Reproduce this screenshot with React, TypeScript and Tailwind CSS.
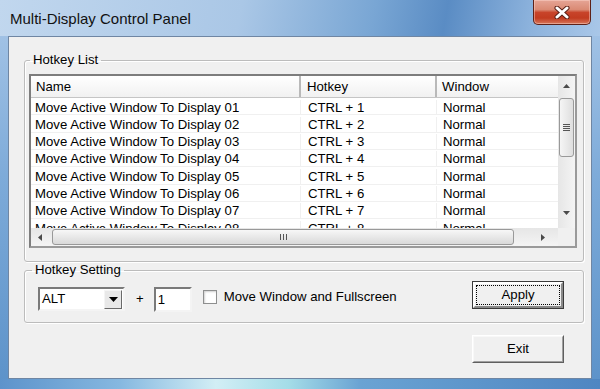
import React from "react";

const rows = Array.from({ length: 8 }, (_, i) => ({
  name: `Move Active Window To Display 0${i + 1}`,
  hotkey: `CTRL + ${i + 1}`,
  window: "Normal",
}));

function Arrow({ dir }: { dir: "up" | "down" | "left" | "right" }) {
  const pts = {
    up: "0,4 7,4 3.5,0",
    down: "0,0 7,0 3.5,4",
    left: "4,0 4,7 0,3.5",
    right: "0,0 0,7 4,3.5",
  }[dir];
  const w = dir === "up" || dir === "down" ? 7 : 4;
  const h = dir === "up" || dir === "down" ? 4 : 7;
  return (
    <svg width={w} height={h} viewBox={`0 0 ${w} ${h}`}>
      <polygon points={pts} fill="#4a4a4a" />
    </svg>
  );
}

function ListView() {
  return (
    <div className="mt-[6px] ml-[4px] w-[548px] h-[174px] border-2 border-t-[#7d7d7d] border-l-[#7d7d7d] border-r-[#9a9a9a] border-b-[#9a9a9a] bg-white flex flex-col">
      <div className="flex flex-1 min-h-0">
        <div className="w-[527px] flex flex-col">
          {/* header */}
          <div className="h-[22px] flex bg-[linear-gradient(180deg,#ffffff,#f1f1f1)] border-b border-[#c5c5c5] text-black">
            <div className="w-[270px] pl-[5px] flex items-center border-r-2 border-r-[#b9b9b9]">Name</div>
            <div className="w-[136px] pl-[6px] flex items-center border-r-2 border-r-[#b9b9b9]">Hotkey</div>
            <div className="flex-1 pl-[5px] flex items-center">Window</div>
          </div>
          {/* rows */}
          <div className="flex-1 overflow-hidden">
            {rows.map((r) => (
              <div key={r.name} className="h-[17.33px] pt-[1.5px] flex leading-[15.5px] border-b border-[#f0f0f0] text-black whitespace-nowrap">
                <div className="w-[270px] pl-[4px] border-r border-[#f0f0f0]">{r.name}</div>
                <div className="w-[136px] pl-[7px] border-r border-[#f0f0f0]">{r.hotkey}</div>
                <div className="flex-1 pl-[6px]">{r.window}</div>
              </div>
            ))}
          </div>
        </div>
        {/* vertical scrollbar */}
        <div className="w-[17px] flex flex-col bg-[linear-gradient(90deg,#e6e6e6,#f4f4f4)]">
          <div className="h-[20px] flex items-center justify-center">
            <Arrow dir="up" />
          </div>
          <div className="mt-[2px] mx-[1px] h-[59px] rounded-[3px] border border-[#999] bg-[linear-gradient(90deg,#f5f5f5,#dedede)] flex flex-col items-center justify-center gap-[1px]">
            <div className="w-[7px] h-px bg-[#555]" />
            <div className="w-[7px] h-px bg-[#555]" />
            <div className="w-[7px] h-px bg-[#555]" />
            <div className="w-[7px] h-px bg-[#555]" />
          </div>
          <div className="flex-1" />
          <div className="h-[20px] mb-[5px] flex items-center justify-center">
            <Arrow dir="down" />
          </div>
        </div>
      </div>
      {/* horizontal scrollbar */}
      <div className="h-[18px] flex">
        <div className="w-[527px] flex items-center bg-[linear-gradient(180deg,#e6e6e6,#f4f4f4)]">
          <div className="w-[18px] flex items-center justify-center">
            <Arrow dir="left" />
          </div>
          <div className="ml-[3px] w-[462px] h-[16px] rounded-[3px] border border-[#999] bg-[linear-gradient(180deg,#f7f7f7,#d9d9d9)] flex items-center justify-center gap-[2px]">
            <div className="w-px h-[6px] bg-[#555]" />
            <div className="w-px h-[6px] bg-[#555]" />
            <div className="w-px h-[6px] bg-[#555]" />
          </div>
          <div className="flex-1" />
          <div className="w-[18px] mr-[6px] flex items-center justify-center">
            <Arrow dir="right" />
          </div>
        </div>
        <div className="flex-1 bg-[#f0f0f0]" />
      </div>
    </div>
  );
}

function ClassicButton({ label, isDefault }: { label: string; isDefault?: boolean }) {
  if (isDefault) {
    return (
      <button className="w-[92px] h-[28px] border border-[#3a3a3a] bg-[#f0f0f0] p-0">
        <div className="h-full border-2 border-t-white border-l-white border-r-[#8a8a8a] border-b-[#8a8a8a] p-[1px]">
          <div className="h-full border border-dotted border-black flex items-center justify-center text-black">
            {label}
          </div>
        </div>
      </button>
    );
  }
  return (
    <button className="w-[92px] h-[28px] border border-t-white border-l-white border-r-[#5f5f5f] border-b-[#5f5f5f] bg-[#f0f0f0] p-0">
      <div className="h-full border border-t-[#f8f8f8] border-l-[#f8f8f8] border-r-[#a0a0a0] border-b-[#a0a0a0] flex items-center justify-center text-black">
        {label}
      </div>
    </button>
  );
}

export default function App() {
  return (
    <div className="w-[600px] h-[389px] flex flex-col overflow-hidden bg-[linear-gradient(180deg,#a9c7e8_0%,#7eabd9_45%,#5c92c9_100%)] font-['Liberation_Sans',Arial,sans-serif] text-[13.2px]">
      {/* title bar */}
      <div className="h-[36px] flex items-start justify-between bg-[linear-gradient(100deg,#c1d7ee_0%,#aac7e6_40%,#79a6d4_62%,#5a8cc4_74%,#8cb2dc_88%,#a9c7e8_100%)]">
        <span className="ml-[10px] mt-[10px] text-[15px] leading-[18px] text-[#111]">Multi-Display Control Panel</span>
        <div className="mr-[9px] w-[58px] h-[25px] rounded-b-[5px] border border-t-0 border-[#5e2118] bg-[linear-gradient(180deg,#e6a596_0%,#da8a74_40%,#c8442a_52%,#c23b20_75%,#d7765a_100%)] shadow-[inset_0_0_0_1px_rgba(255,220,210,0.45)] flex items-center justify-center">
          <svg width="16" height="13" viewBox="0 0 16 13">
            <path d="M3 2 L13 11 M13 2 L3 11" stroke="#5b2016" strokeWidth="5" strokeLinecap="round" />
            <path d="M3 2 L13 11 M13 2 L3 11" stroke="#ffffff" strokeWidth="3" strokeLinecap="round" />
          </svg>
        </div>
      </div>

      {/* client area */}
      <div className="mx-[8px] h-[343px] border border-[#6f86a3] bg-[#f0f0f0] flex flex-col">
        <fieldset className="mt-[15px] ml-[15px] mr-[7px] h-[210px] border border-[#bcbcbc] rounded-[3px] shadow-[inset_1px_1px_0_#fff,1px_1px_0_#fff]">
          <legend className="ml-[5px] px-[3px] leading-[16px] text-black">Hotkey List</legend>
          <ListView />
        </fieldset>

        <fieldset className="ml-[15px] mr-[7px] h-[61px] border border-[#bcbcbc] rounded-[3px] shadow-[inset_1px_1px_0_#fff,1px_1px_0_#fff]">
          <legend className="ml-[7px] px-[3px] leading-[16px] text-black">Hotkey Setting</legend>
          <div className="mt-[3px] flex items-start">
            {/* combo */}
            <div className="ml-[13px] mt-[6px] w-[87px] h-[24px] border-2 border-t-[#7a7a7a] border-l-[#7a7a7a] border-r-[#f4f4f4] border-b-[#f4f4f4] bg-white flex items-center">
              <span className="flex-1 pl-[2px] text-black">ALT</span>
              <div className="w-[18px] h-[19px] mr-[1px] border border-t-[#f4f4f4] border-l-[#f4f4f4] border-r-[#6a6a6a] border-b-[#6a6a6a] bg-[#e8e8e8] flex items-center justify-center">
                <svg width="9" height="5" viewBox="0 0 9 5">
                  <polygon points="0,0 9,0 4.5,5" fill="#000" />
                </svg>
              </div>
            </div>
            <span className="ml-[11px] mt-[10px] leading-[16px] text-black">+</span>
            {/* edit */}
            <div className="ml-[10px] mt-[6px] w-[38px] h-[25px] border-2 border-t-[#7a7a7a] border-l-[#7a7a7a] border-r-[#f4f4f4] border-b-[#f4f4f4] bg-white flex items-center pl-[2px] text-black">
              1
            </div>
            {/* checkbox */}
            <div className="ml-[11px] mt-[9px] w-[14px] h-[14px] border border-[#8e8f8f] bg-white shadow-[inset_1px_1px_2px_#d0d0d0]" />
            <span className="ml-[7px] mt-[8px] leading-[16px] text-black">Move Window and Fullscreen</span>
            <div className="ml-auto mr-[19px]">
              <ClassicButton label="Apply" isDefault />
            </div>
          </div>
        </fieldset>

        <div className="mt-[12px] flex justify-end pr-[27px]">
          <ClassicButton label="Exit" />
        </div>
      </div>

      {/* bottom frame */}
      <div className="flex-1 bg-[linear-gradient(90deg,#5d93cb_0%,#86b8e0_20%,#d2eef5_36%,#a5dde8_48%,#6aa3d3_60%,#4f86c2_100%)]" />
    </div>
  );
}
